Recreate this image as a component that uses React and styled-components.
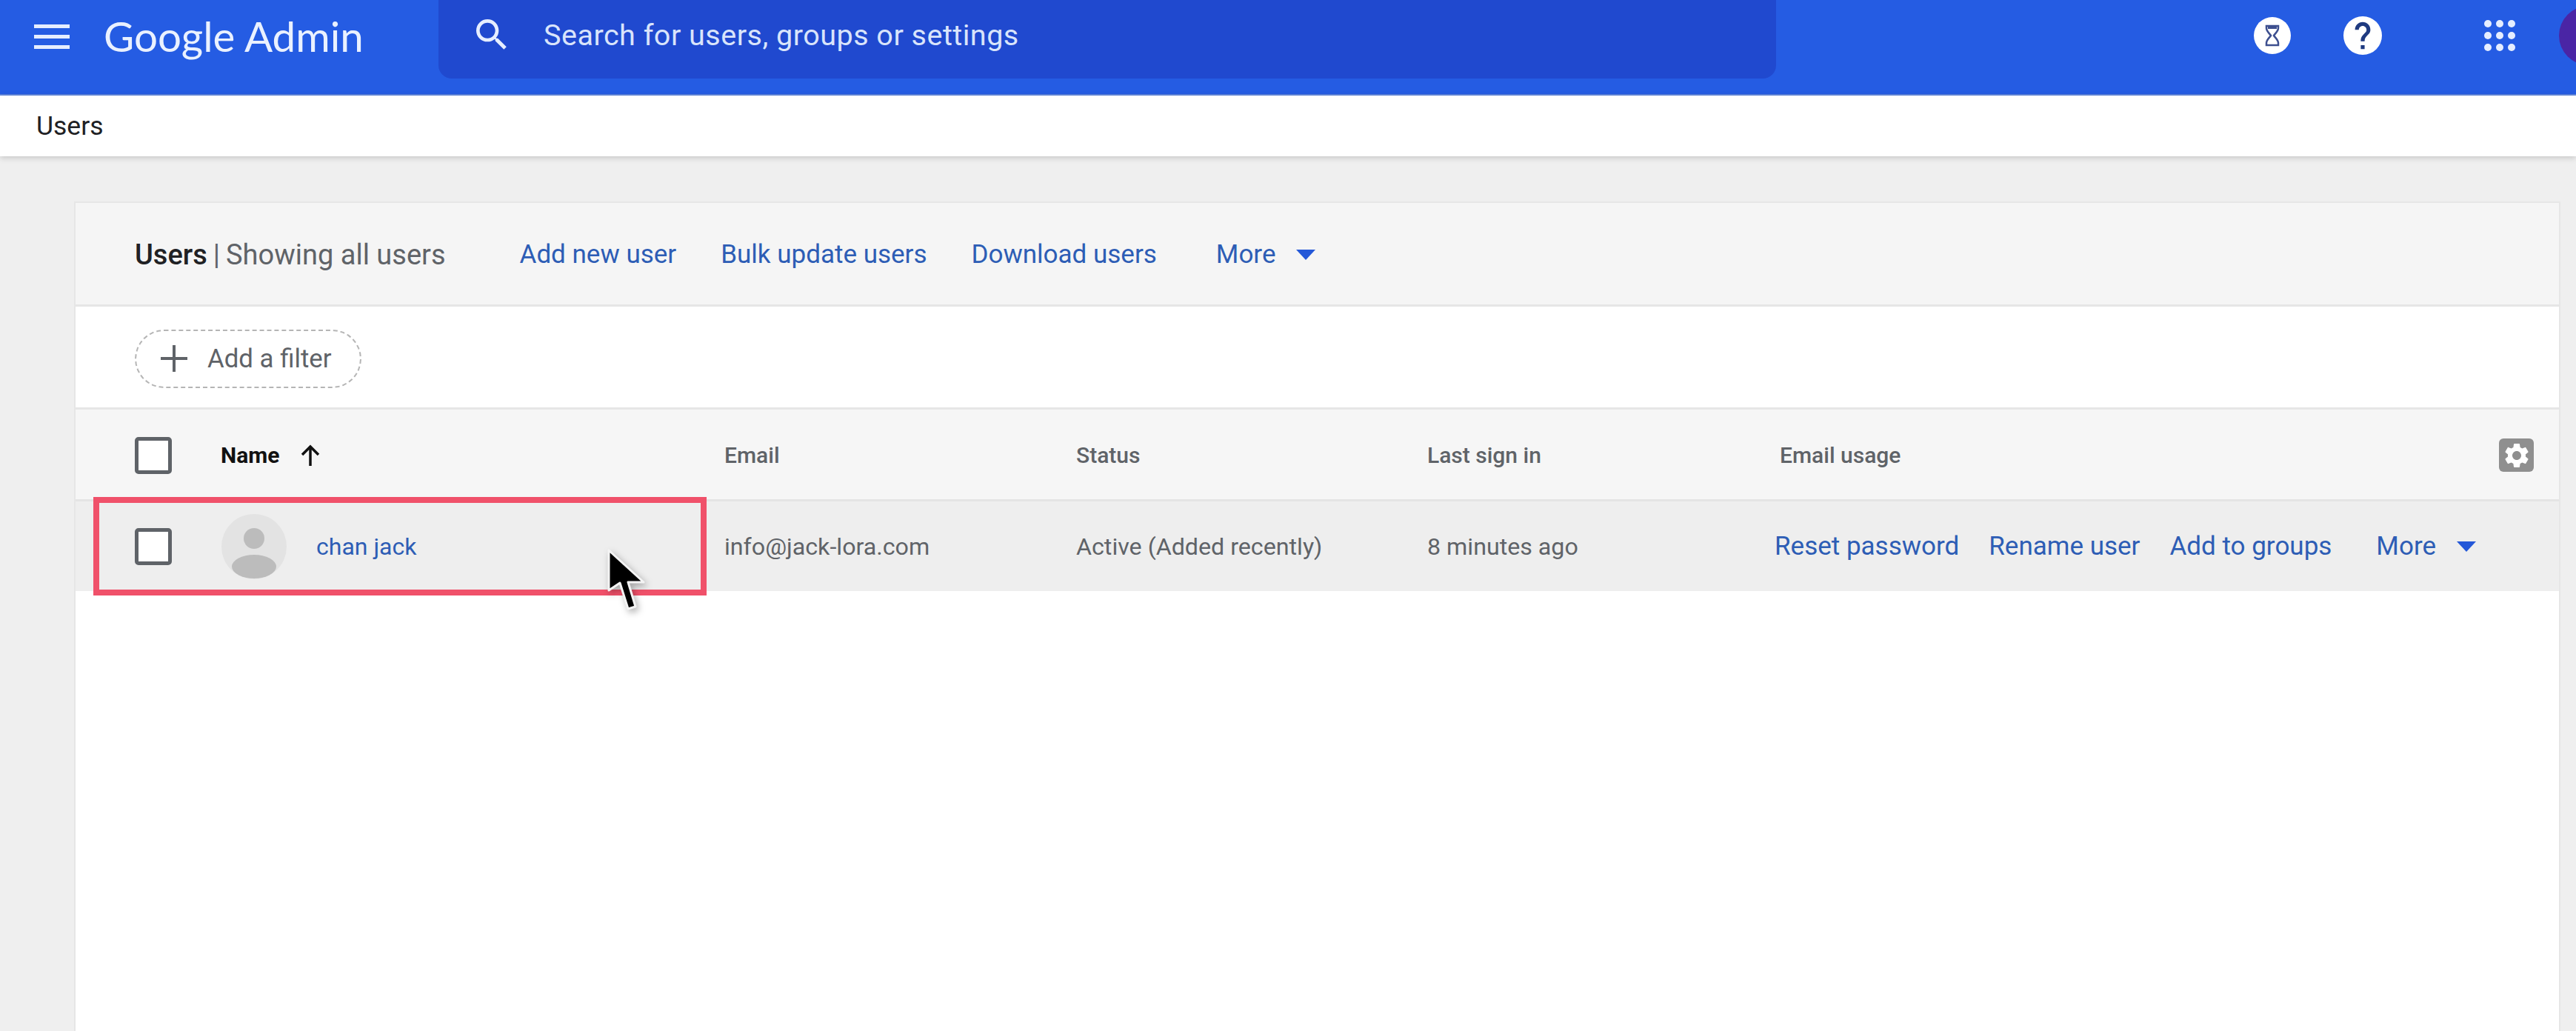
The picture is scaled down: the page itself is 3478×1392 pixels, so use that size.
import React from 'react'
import styled, { createGlobalStyle } from 'styled-components'

const GlobalStyle = createGlobalStyle`
  html, body {
    margin: 0;
    height: 1392px;
    overflow: hidden;
    background: #efefef;
    font-family: Roboto, "Liberation Sans", sans-serif;
  }
`
const Page = styled.div`
  position: relative;
  width: 3478px;
  height: 1392px;
  overflow: hidden;
  display: flex;
  flex-direction: column;
`
const Header = styled.header`
  height: 127px;
  flex: none;
  background: #255ce3;
  border-bottom: 2px solid #5f85dd;
  display: flex;
  align-items: flex-start;
  box-sizing: content-box;
  color: #fff;
`
const Burger = styled.div`
  width: 48px;
  margin: 33px 0 0 46px;
  display: flex;
  flex-direction: column;
  gap: 9px;
  span {
    height: 5px;
    background: #e6eeff;
  }
`
const Logo = styled.div`
  width: 350px;
  margin: 16px 0 0 46px;
  font-family: Lato, sans-serif;
  font-size: 56.5px;
  line-height: 64px;
  color: #eaf1ff;
  white-space: nowrap;
`
const SearchBox = styled.div`
  width: 1806px;
  height: 106px;
  margin-left: 102px;
  background: #2049cf;
  border-radius: 0 0 18px 18px;
  display: flex;
  align-items: center;
  padding-bottom: 12px;
  box-sizing: border-box;
  svg {
    margin-left: 44px;
    fill: #e6eeff;
  }
`
const SearchText = styled.span`
  margin-left: 42px;
  font-size: 39.5px;
  color: #d9e4fb;
  letter-spacing: 0.5px;
`
const HeaderIcons = styled.div`
  margin-left: auto;
  display: flex;
  align-items: center;
  height: 96px;
`
const RoundIcon = styled.svg`
  margin-left: ${(p) => p.$gap}px;
`
const Dots = styled.div`
  margin-left: 138px;
  display: grid;
  grid-template-columns: repeat(3, 10px);
  grid-auto-rows: 10px;
  gap: 6px;
  span {
    border-radius: 50%;
    background: #e6eeff;
  }
`
const AccountDot = styled.div`
  width: 80px;
  height: 80px;
  margin: 0 -57px 0 59px;
  border-radius: 50%;
  background: #4a25a5;
`
const SubBar = styled.div`
  height: 82px;
  flex: none;
  background: #fff;
  box-shadow: 0 2px 8px rgba(0, 0, 0, 0.18);
  position: relative;
  padding-left: 49px;
  display: flex;
  align-items: center;
  font-size: 35.5px;
  color: #202124;
`
const Main = styled.main`
  flex: 1;
  padding: 63px 23px 0 102px;
  min-height: 0;
`
const Card = styled.section`
  height: 100%;
  background: #fff;
  box-shadow: 0 0 0 2px #e6e6e6;
`
const CardHead = styled.div`
  height: 140px;
  box-sizing: border-box;
  background: #f5f5f5;
  border-bottom: 3px solid #e6e6e6;
  display: flex;
  align-items: center;
  padding: 2px 0 0 80px;
  font-size: 38px;
  color: #5f6368;
`
const Title = styled.span`
  color: #202124;
  font-weight: 500;
`
const Divider = styled.span`
  margin: 0 8px;
`
const HeadLinks = styled.div`
  margin-left: 100px;
  display: flex;
  align-items: center;
`
const LinkText = styled.a`
  color: #2d5db5;
  font-size: ${(p) => p.$size || 35}px;
  margin-right: ${(p) => p.$gap || 0}px;
  white-space: nowrap;
`
const Caret = styled.span`
  width: 0;
  height: 0;
  margin-left: 28px;
  border-left: 13px solid transparent;
  border-right: 13px solid transparent;
  border-top: 14px solid #2458d8;
`
const FilterRow = styled.div`
  height: 139px;
  box-sizing: border-box;
  border-bottom: 3px solid #e6e6e6;
  display: flex;
  align-items: center;
  padding: 4px 0 0 80px;
`
const FilterPill = styled.div`
  width: 306px;
  height: 79px;
  box-sizing: border-box;
  border: 2px dashed #b5b5b5;
  border-radius: 40px;
  display: flex;
  align-items: center;
  padding-left: 32px;
  gap: 26px;
  font-size: 34.8px;
  color: #5f6368;
`
const TableGrid = styled.div`
  display: grid;
  grid-template-columns: 116px 680px 475px 474px 476px 1fr;
  align-items: center;
  padding: ${(p) => (p.$line ? 2 : 0)}px 0 0 80px;
  height: ${(p) => p.$height}px;
  background: ${(p) => p.$bg};
  border-bottom: ${(p) => (p.$line ? '3px solid #e4e4e4' : 'none')};
  box-sizing: border-box;
`
const Box = styled.div`
  width: 50px;
  height: 50px;
  box-sizing: border-box;
  border: 5px solid #5f6368;
  border-radius: 5px;
  background: #fff;
`
const NameHead = styled.div`
  display: flex;
  align-items: center;
  gap: 28px;
  font-size: 30px;
  font-weight: 700;
  color: #111;
`
const ColHead = styled.div`
  font-size: 30px;
  font-weight: 500;
  color: #5f6368;
`
const LastHead = styled(ColHead)`
  display: flex;
  align-items: center;
  justify-content: space-between;
  padding-right: 34px;
`
const GearBox = styled.div`
  width: 47px;
  height: 45px;
  border-radius: 6px;
  background: #8f8f8f;
  display: flex;
  align-items: center;
  justify-content: center;
  svg {
    fill: #fff;
  }
`
const NameCell = styled.div`
  display: flex;
  align-items: center;
  gap: 39px;
`
const Cell = styled.div`
  font-size: 32.2px;
  color: #5f6368;
  white-space: nowrap;
`
const Actions = styled.div`
  display: flex;
  align-items: center;
  margin-left: -7px;
`
const Highlight = styled.div`
  position: absolute;
  left: 126px;
  top: 671px;
  width: 828px;
  height: 133px;
  box-sizing: border-box;
  border: 8px solid #f0516a;
  pointer-events: none;
`
const Cursor = styled.svg`
  position: absolute;
  left: 812px;
  top: 734px;
  filter: drop-shadow(3px 4px 5px rgba(0, 0, 0, 0.3));
`

const Avatar = () => (
  <svg width="90" height="90" viewBox="0 0 90 90">
    <defs>
      <clipPath id="avatar-clip"><circle cx="45" cy="45" r="44" /></clipPath>
    </defs>
    <circle cx="45" cy="45" r="44" fill="#e3e3e3" />
    <g clipPath="url(#avatar-clip)" fill="#bcbcbc">
      <circle cx="45" cy="34" r="14" />
      <ellipse cx="45" cy="72" rx="30" ry="16" />
    </g>
  </svg>
)

const columns = ['Email', 'Status', 'Last sign in']

export default function App() {
  return (
    <Page>
      <GlobalStyle />
      <Header>
        <Burger><span /><span /><span /></Burger>
        <Logo>Google Admin</Logo>
        <SearchBox>
          <svg width="56" height="56" viewBox="0 0 24 24">
            <path d="M15.5 14h-.79l-.28-.27A6.471 6.471 0 0 0 16 9.5 6.5 6.5 0 1 0 9.5 16c1.61 0 3.09-.59 4.23-1.57l.27.28v.79l5 4.99L20.49 19l-4.99-5zm-6 0C7.01 14 5 11.99 5 9.5S7.01 5 9.5 5 14 7.01 14 9.5 11.99 14 9.5 14z" />
          </svg>
          <SearchText>Search for users, groups or settings</SearchText>
        </SearchBox>
        <HeaderIcons>
          <RoundIcon width="50" height="50" viewBox="0 0 50 50" $gap={0}>
            <circle cx="25" cy="25" r="25" fill="#fff" />
            <path d="M17 12h16v3c0 4-4 7-6 10 2 3 6 6 6 10v3H17v-3c0-4 4-7 6-10-2-3-6-6-6-10z" fill="none" stroke="#3d4f8f" strokeWidth="2.5" />
            <path d="M19 12h12v4H19z" fill="#3d4f8f" />
          </RoundIcon>
          <RoundIcon width="52" height="52" viewBox="2 2 20 20" $gap={71}>
            <circle cx="12" cy="12" r="10" fill="#fff" />
            <path d="M13 19h-2v-2h2v2zm2.07-7.75l-.9.92C13.45 12.9 13 13.5 13 15h-2v-.5c0-1.1.45-2.1 1.17-2.83l1.24-1.26c.37-.36.59-.86.59-1.41 0-1.1-.9-2-2-2s-2 .9-2 2H8c0-2.21 1.79-4 4-4s4 1.79 4 4c0 .88-.36 1.68-.93 2.25z" fill="#1f3a80" />
          </RoundIcon>
          <Dots>
            {Array.from({ length: 9 }, (_, i) => <span key={i} />)}
          </Dots>
          <AccountDot />
        </HeaderIcons>
      </Header>
      <SubBar>Users</SubBar>
      <Main>
        <Card>
          <CardHead>
            <Title>Users</Title>
            <Divider>|</Divider>
            Showing all users
            <HeadLinks>
              <LinkText $gap={60}>Add new user</LinkText>
              <LinkText $gap={60}>Bulk update users</LinkText>
              <LinkText $gap={80}>Download users</LinkText>
              <LinkText>More</LinkText>
              <Caret />
            </HeadLinks>
          </CardHead>
          <FilterRow>
            <FilterPill>
              <svg width="38" height="38" viewBox="0 0 38 38">
                <path d="M19 1v36M1 19h36" stroke="#5f6368" strokeWidth="4" fill="none" />
              </svg>
              Add a filter
            </FilterPill>
          </FilterRow>
          <TableGrid $height={124} $bg="#f6f6f6" $line>
            <Box />
            <NameHead>
              Name
              <svg width="28" height="30" viewBox="0 0 28 30">
                <path d="M14 29V3M3 14L14 3l11 11" stroke="#111" strokeWidth="3.5" fill="none" />
              </svg>
            </NameHead>
            {columns.map((c) => <ColHead key={c}>{c}</ColHead>)}
            <LastHead>
              Email usage
              <GearBox>
                <svg width="40" height="40" viewBox="0 0 24 24">
                  <path d="M19.14 12.94c.04-.3.06-.61.06-.94 0-.32-.02-.64-.07-.94l2.03-1.58a.49.49 0 0 0 .12-.61l-1.92-3.32a.488.488 0 0 0-.59-.22l-2.39.96c-.5-.38-1.03-.7-1.62-.94l-.36-2.54a.484.484 0 0 0-.48-.41h-3.84c-.24 0-.43.17-.47.41l-.36 2.54c-.59.24-1.13.57-1.62.94l-2.39-.96c-.22-.08-.47 0-.59.22L2.74 8.87c-.12.21-.08.47.12.61l2.03 1.58c-.05.3-.09.63-.09.94s.02.64.07.94l-2.03 1.58a.49.49 0 0 0-.12.61l1.92 3.32c.12.22.37.29.59.22l2.39-.96c.5.38 1.03.7 1.62.94l.36 2.54c.05.24.24.41.48.41h3.84c.24 0 .44-.17.47-.41l.36-2.54c.59-.24 1.13-.56 1.62-.94l2.39.96c.22.08.47 0 .59-.22l1.92-3.32c.12-.22.07-.47-.12-.61l-2.01-1.58zM12 15.6c-1.98 0-3.6-1.62-3.6-3.6s1.62-3.6 3.6-3.6 3.6 1.62 3.6 3.6-1.62 3.6-3.6 3.6z" />
                </svg>
              </GearBox>
            </LastHead>
          </TableGrid>
          <TableGrid $height={121} $bg="#eeeeee">
            <Box />
            <NameCell>
              <Avatar />
              <LinkText $size={32}>chan jack</LinkText>
            </NameCell>
            <Cell>info@jack-lora.com</Cell>
            <Cell>Active (Added recently)</Cell>
            <Cell>8 minutes ago</Cell>
            <Actions>
              <LinkText $gap={40}>Reset password</LinkText>
              <LinkText $gap={40}>Rename user</LinkText>
              <LinkText $gap={60}>Add to groups</LinkText>
              <LinkText>More</LinkText>
              <Caret />
            </Actions>
          </TableGrid>
        </Card>
      </Main>
      <Highlight />
      <Cursor width="70" height="100" viewBox="0 0 70 100">
        <path d="M10 9v54l15-10 11 35 10-3-10-33h21z" fill="#000" stroke="#f4f4f4" strokeWidth="3" strokeLinejoin="round" />
      </Cursor>
    </Page>
  )
}
